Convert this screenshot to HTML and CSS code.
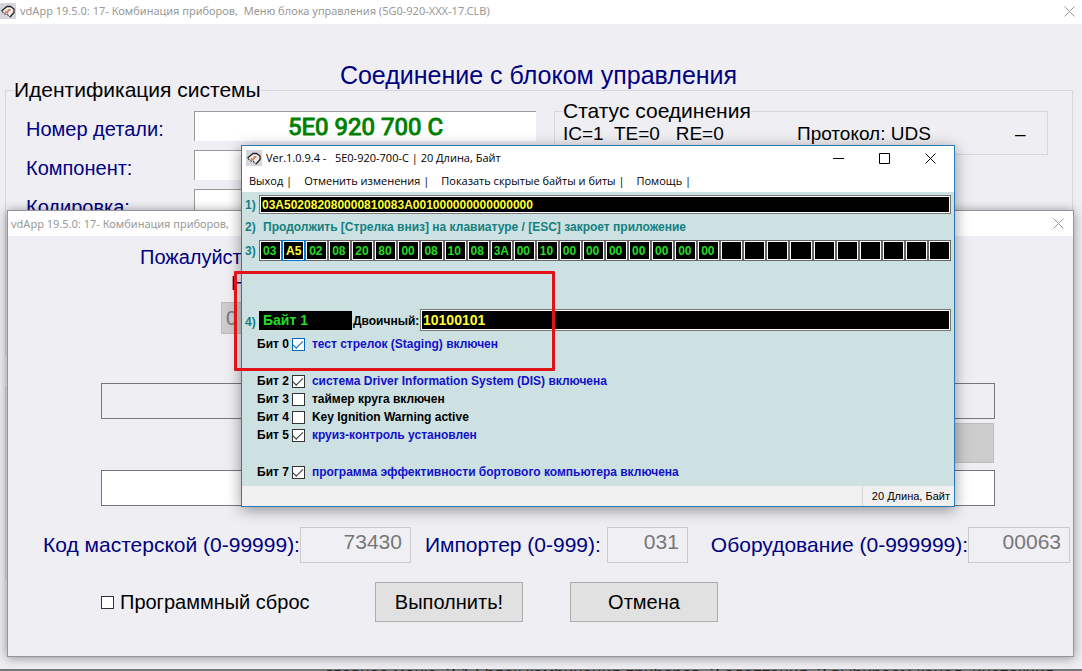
FILE: index.html
```
<!DOCTYPE html>
<html lang="ru">
<head>
<meta charset="utf-8">
<title>vdApp 19.5.0</title>
<link rel="stylesheet" href="styles.css">
</head>
<body>
<svg class="defs" aria-hidden="true">
  <symbol id="logo" viewBox="0 0 16 16">
    <rect width="16" height="16" fill="#d5d6dc"/>
    <path d="M2 8L7 3.500h4l3 3v3l-4 4.500L7 11z" fill="#f4efed"/>
    <path d="M1.500 8L7 3.500h3.500L14 6v3.500L10 14" fill="none" stroke="#222" stroke-width="1.300"/>
    <path d="M2 8.500L5 11l2.500.5L10 14" fill="none" stroke="#444" stroke-width="1.200" stroke-dasharray="2 1"/>
    <path d="M5 8.500l2 1.500 1.500-3h2" fill="none" stroke="#d88468" stroke-width="1.800"/>
  </symbol>
  <symbol id="close" viewBox="0 0 11 11"><path d="M.5.5l10 10M10.500.5l-10 10" stroke="currentColor" fill="none"/></symbol>
</svg>
<div class="desktop">
  <main class="window main-window">
    <header class="titlebar">
      <svg class="logo"><use href="#logo"/></svg>
      <span class="title">vdApp 19.5.0: 17- Комбинация приборов,&nbsp; Меню блока управления (5G0-920-XXX-17.CLB)</span>
      <button class="caption" aria-label="Закрыть"><svg class="glyph"><use href="#close"/></svg></button>
    </header>
    <h1 class="heading">Соединение с блоком управления</h1>
    <fieldset class="group ident">
      <legend>Идентификация системы</legend>
      <div class="ident-body">
        <div class="fields">
          <label for="part">Номер детали:</label><input id="part" class="part" value="5E0 920 700 C" readonly>
          <label for="comp">Компонент:</label><input id="comp" readonly>
          <label for="code">Кодировка:</label><input id="code" readonly>
        </div>
        <fieldset class="group status">
          <legend>Статус соединения</legend>
          <div class="status-row">
            <span class="pre">IC=1  TE=0   RE=0</span><span class="protocol">Протокол: UDS</span><span>–</span>
          </div>
        </fieldset>
      </div>
    </fieldset>
    <section class="group lower"></section>
  </main>
  <div class="strip"><span>главное меню, 3-17 блок комбинация приборов, 3 адаптация, 3 выбираем канал, инспекция</span></div>

  <section class="window dialog">
    <header class="titlebar">
      <span class="title">vdApp 19.5.0: 17- Комбинация приборов,</span>
      <button class="caption" aria-label="Закрыть"><svg class="glyph"><use href="#close"/></svg></button>
    </header>
    <div class="dialog-body">
      <div class="prompt">
        <p>Пожалуйст</p>
        <p class="indent">Н</p>
        <input class="small-code" aria-label="Код" value="0" readonly>
      </div>
      <div class="stack">
        <input class="wide flat" aria-label="Описание" readonly>
        <button class="disabled-button" aria-label="Справка" disabled></button>
        <input class="wide" aria-label="Значение">
      </div>
      <div class="codes">
        <label for="shop">Код мастерской (0-99999):</label><input id="shop" class="shop" value="73430" readonly>
        <label for="imp" class="imp-label">Импортер (0-999):</label><input id="imp" class="imp" value="031" readonly>
        <label for="equip" class="equip-label">Оборудование (0-999999):</label><input id="equip" class="equip" value="00063" readonly>
      </div>
      <div class="actions">
        <label class="reset"><input type="checkbox" class="check">Программный сброс</label>
        <button class="push">Выполнить!</button>
        <button class="push">Отмена</button>
      </div>
    </div>
  </section>

  <section class="window editor">
    <header class="titlebar">
      <svg class="logo"><use href="#logo"/></svg>
      <span class="title">Ver.1.0.9.4 -&nbsp;&nbsp; 5E0-920-700-C | 20 Длина, Байт</span>
      <button class="caption" aria-label="Свернуть"><svg class="glyph" viewBox="0 0 11 11"><path d="M0 5.500h11" stroke="currentColor"/></svg></button>
      <button class="caption" aria-label="Развернуть"><svg class="glyph" viewBox="0 0 11 11"><path d="M.5.5h10v10H.5z" fill="none" stroke="currentColor"/></svg></button>
      <button class="caption" aria-label="Закрыть"><svg class="glyph"><use href="#close"/></svg></button>
    </header>
    <nav class="menu">
      <button>Выход |</button><button>Отменить изменения |</button><button>Показать скрытые байты и биты |</button><button>Помощь |</button>
    </nav>
    <div class="editor-body">
      <div class="line">
        <label class="step" for="coding">1)</label><input id="coding" class="black coding" value="03A502082080000810083A001000000000000000" readonly>
      </div>
      <div class="line hint"><span class="step">2)</span><span>Продолжить [Стрелка вниз] на клавиатуре / [ESC] закроет приложение</span></div>
      <div class="line">
        <span class="step">3)</span>
        <div class="cells">
          <input aria-label="Байт 0" value="03"><input class="active" aria-label="Байт 1" value="A5"><input aria-label="Байт 2" value="02"><input aria-label="Байт 3" value="08"><input aria-label="Байт 4" value="20"><input aria-label="Байт 5" value="80"><input aria-label="Байт 6" value="00"><input aria-label="Байт 7" value="08"><input aria-label="Байт 8" value="10"><input aria-label="Байт 9" value="08"><input aria-label="Байт 10" value="3A"><input aria-label="Байт 11" value="00"><input aria-label="Байт 12" value="10"><input aria-label="Байт 13" value="00"><input aria-label="Байт 14" value="00"><input aria-label="Байт 15" value="00"><input aria-label="Байт 16" value="00"><input aria-label="Байт 17" value="00"><input aria-label="Байт 18" value="00"><input aria-label="Байт 19" value="00"><input aria-label="Байт 20"><input aria-label="Байт 21"><input aria-label="Байт 22"><input aria-label="Байт 23"><input aria-label="Байт 24"><input aria-label="Байт 25"><input aria-label="Байт 26"><input aria-label="Байт 27"><input aria-label="Байт 28"><input aria-label="Байт 29">
        </div>
      </div>
      <div class="line byte-line">
        <span class="step">4)</span><span class="byte-name">Байт 1</span><label class="binary-label" for="binary">Двоичный:</label><input id="binary" class="black binary" value="10100101">
      </div>
      <div class="bits">
        <label class="bit on focus">Бит 0<input type="checkbox" class="check" checked><span>тест стрелок (Staging) включен</span></label>
      </div>
      <div class="bits">
        <label class="bit on">Бит 2<input type="checkbox" class="check" checked><span>система Driver Information System (DIS) включена</span></label>
        <label class="bit">Бит 3<input type="checkbox" class="check"><span>таймер круга включен</span></label>
        <label class="bit">Бит 4<input type="checkbox" class="check"><span>Key Ignition Warning active</span></label>
        <label class="bit on">Бит 5<input type="checkbox" class="check" checked><span>круиз-контроль установлен</span></label>
      </div>
      <div class="bits">
        <label class="bit on">Бит 7<input type="checkbox" class="check" checked><span>программа эффективности бортового компьютера включена</span></label>
      </div>
    </div>
    <footer class="statusbar"><span>20 Длина, Байт</span></footer>
  </section>
  <div class="marker"></div>
</div>
</body>
</html>
```
FILE: styles.css
```
* { box-sizing: border-box; }
body { margin: 0; font: 20px/24px "Liberation Sans", Arial, sans-serif; color: #000; }
h1, p { margin: 0; font-weight: normal; }
input, button { font: inherit; color: inherit; border-radius: 0; margin: 0; min-width: 0; }
.defs { position: absolute; width: 0; height: 0; }
.desktop { position: relative; min-height: 100vh; overflow: hidden; display: flex; flex-direction: column; background: #77777b; }
.window { background: #eeeef3; }
.main-window { flex: 1; }

.titlebar { display: flex; align-items: center; background: #fff; font: 11px/16px "Open Sans", "Noto Sans", sans-serif; }
.title { flex: 1; white-space: nowrap; overflow: hidden; }
.logo { width: 16px; height: 16px; flex: none; }
.caption { display: flex; border: 0; padding: 0; background: none; }
.glyph { width: 11px; height: 11px; }
.main-window .titlebar { height: 24px; gap: 4px; padding: 0 7px 2px 0; color: #999; font-family: "Noto Sans", sans-serif; }

.heading { margin-top: 37px; padding-right: 5px; text-align: center; color: #000080; font-size: 25px; line-height: 28px; }
.group { margin: 0; padding: 0; border: 1px solid #d6d6dc; min-width: 0; }
.group legend { padding: 0; margin-left: 8px; height: 24px; font-size: 21px; }
.ident { margin: -11px 9px 0 5px; height: 277px; }
.ident-body { display: flex; justify-content: space-between; gap: 18px; padding: 9px 24px 0 20px; }
.fields { display: grid; grid-template-columns: 168px 342px; grid-auto-rows: 30px; row-gap: 9px; align-items: center; color: #000080; }
.fields label { padding-top: 6px; }
.fields input { height: 30px; padding: 0; border: 0; border-top: 1px solid #999; border-left: 1px solid #999; background: #fff; }
.fields .part { color: #008000; text-align: center; font: 24px/28px Roboto, sans-serif; -webkit-text-stroke: 1px #008000; }
.status { flex: 1; height: 56px; margin-top: -12px; }
.status-row { display: grid; grid-template-columns: 234px 1fr 32px; padding-left: 8px; font-size: 19px; line-height: 22px; }
.pre { white-space: pre; }
.lower { margin: 32px 9px 0 5px; height: 192px; }
.strip { height: 2px; overflow: hidden; padding-left: 326px; font-size: 17px; line-height: 10px; color: #222; white-space: nowrap; }

.dialog { position: absolute; left: 7px; right: 8px; top: 210px; border: 1px solid #96969a; box-shadow: 0 1px 10px rgba(0, 0, 0, .4); }
.dialog .titlebar { height: 25px; padding: 0 9px 0 3px; color: #999; font-family: "Noto Sans", sans-serif; }
.dialog-body { color: #000080; padding-bottom: 34px; }
.prompt { padding: 8px 0 0 132px; line-height: 26px; }
.prompt .indent { padding-left: 91px; }
.small-code { display: block; margin: 6px 0 0 81px; width: 200px; height: 32px; border: 1px solid #bbb; background: #ccc; color: #777; padding: 0 4px; }
.stack { display: flex; flex-direction: column; margin: 49px 78px 0 93px; }
.wide { height: 36px; border: 1px solid #77777b; background: #fff; }
.flat { background: none; }
.disabled-button { align-self: flex-end; width: 147px; height: 40px; margin: 4px 1px 7px 0; border: 1px solid #bdbdbf; background: #ccc; }
.codes { display: flex; align-items: center; margin: 21px 3px 0 35px; white-space: nowrap; font-size: 21px; }
.codes input { height: 36px; padding: 0 8px 6px; border: 1px solid #c9c9ce; background: #f0f0f4; color: #777; text-align: right; }
.codes .shop { width: 111px; }
.codes .imp { width: 81px; margin-left: 6px; }
.codes .equip { flex: 1; }
.imp-label { margin-left: 14px; }
.equip-label { margin-left: 23px; }
.actions { display: flex; align-items: center; margin: 19px 0 0 93px; color: #000; }
.reset { display: flex; align-items: center; gap: 6px; width: 274px; }
.push { width: 148px; height: 40px; margin-right: 47px; border: 1px solid #adadad; background: #e1e1e1; }

.check { appearance: none; width: 13px; height: 13px; flex: none; display: grid; place-items: center; border: 1px solid #333; background: #fff; }
.check:checked::after { content: ""; width: 9px; height: 4px; border: solid #333; border-width: 0 0 1px 1px; transform: translateY(-1px) rotate(-45deg); }
.focus .check { border-color: #0067b8; }
.focus .check:checked::after { border-color: #0067b8; }

.editor { position: absolute; left: 241px; right: 127px; top: 145px; border: 1px solid #2a7ab8; background: #cde0e2; box-shadow: 0 3px 14px rgba(0, 0, 0, .4); font: bold 12px/16px "Liberation Sans", Arial, sans-serif; }
.editor .titlebar { height: 24px; gap: 4px; padding: 0 18px 0 4px; }
.editor .caption { margin-left: 31px; }
.menu { display: flex; gap: 12px; height: 22px; padding: 0 7px; background: #fff; font: 11px/22px "Open Sans", "Noto Sans", sans-serif; }
.menu button { border: 0; padding: 0; background: none; white-space: nowrap; }
.editor-body { padding: 3px 3px 4px; height: 294px; }
.line { display: flex; align-items: center; }
.step { width: 14px; flex: none; color: #148080; }
.black { flex: 1; height: 19px; padding: 0 2px; border: 1px solid #777; outline: 1px solid #fff; outline-offset: -2px; background: #000; color: #ff3; }
.hint { height: 26px; color: #148080; }
.hint .step { width: 18px; }
.cells { flex: 1; display: flex; }
.cells input { flex: 1; width: 0; height: 21px; padding: 0 2px 0 3px; border: 1px solid #666; outline: 1px solid #fff; outline-offset: -2px; background: #000; color: #2d2; }
.cells .active { color: #ff3; border-color: #0078d7; }
.byte-line { margin-top: 48px; height: 22px; }
.byte-line .step { padding-top: 4px; }
.byte-name { width: 93px; height: 19px; padding-left: 4px; background: #000; color: #2d2; font-size: 14px; line-height: 19px; }
.binary-label { width: 68px; padding: 2px 0 0 1px; }
.binary { height: 22px; font-size: 14px; }
.bits { padding: 4px 0 0 12px; }
.bits + .bits { padding-top: 19px; }
.bit { display: flex; align-items: center; gap: 3px; height: 18px; }
.bit span { padding-left: 4px; }
.bit.on span { color: #11c; }
.statusbar { display: flex; justify-content: flex-end; height: 20px; background: #f0f0f0; font-weight: normal; font-size: 11px; line-height: 20px; }
.statusbar span { border-left: 1px solid #d5d5d5; padding: 0 4px 0 9px; }

.marker { position: absolute; left: 234px; top: 271px; width: 321px; height: 100px; border: 3px solid #e01418; border-radius: 1px; pointer-events: none; }
```
